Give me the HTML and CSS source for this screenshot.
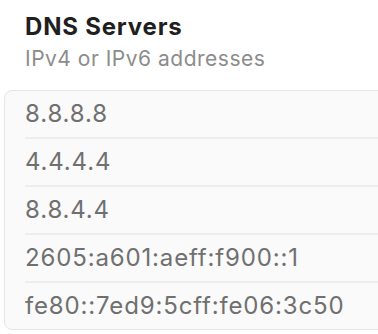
FILE: index.html
```html
<!DOCTYPE html>
<html lang="en">
<head>
<meta charset="UTF-8">
<meta name="viewport" content="width=device-width, initial-scale=1.0">
<title>DNS Servers</title>
<link rel="stylesheet" href="styles.css">
</head>
<body>

<div class="section">
    <div class="header">
        <h2>DNS Servers</h2>
        <p class="hint">IPv4 or IPv6 addresses</p>
    </div>

    <ul class="server-list">
        <li>8.8.8.8</li>
        <li>4.4.4.4</li>
        <li>8.8.4.4</li>
        <li>2605:a601:aeff:f900::1</li>
        <li>fe80::7ed9:5cff:fe06:3c50</li>
    </ul>
</div>

</body>
</html>
```

FILE: styles.css
```css
body {
    font-family: Inter, 'Noto Sans', sans-serif;
    margin: 0;
    padding: 0;
    background: #ffffff;
    overflow: hidden;
}

.section {
    padding: 12px 0 0 4px;
}

.header {
    padding-left: 21px;
}

h2 {
    margin: 0;
    font-size: 24px;
    line-height: 30px;
    font-weight: 700;
    letter-spacing: 0.8px;
    color: #1f1f1f;
}

.hint {
    margin: 4px 0 0;
    font-size: 21px;
    line-height: 26px;
    letter-spacing: 0.5px;
    color: #8c8c8c;
}

.server-list {
    list-style: none;
    margin: 18px -20px 0 0;
    padding: 0 0 0 20px;
    background-color: #fafafa;
    border: 1px solid #e6e6e6;
    border-radius: 8px;
}

.server-list li {
    height: 46px;
    line-height: 46px;
    font-size: 24px;
    letter-spacing: 0.85px;
    color: #707070;
    border-bottom: 2px solid #eeeeee;
}

.server-list li:last-child {
    border-bottom: none;
}
```
